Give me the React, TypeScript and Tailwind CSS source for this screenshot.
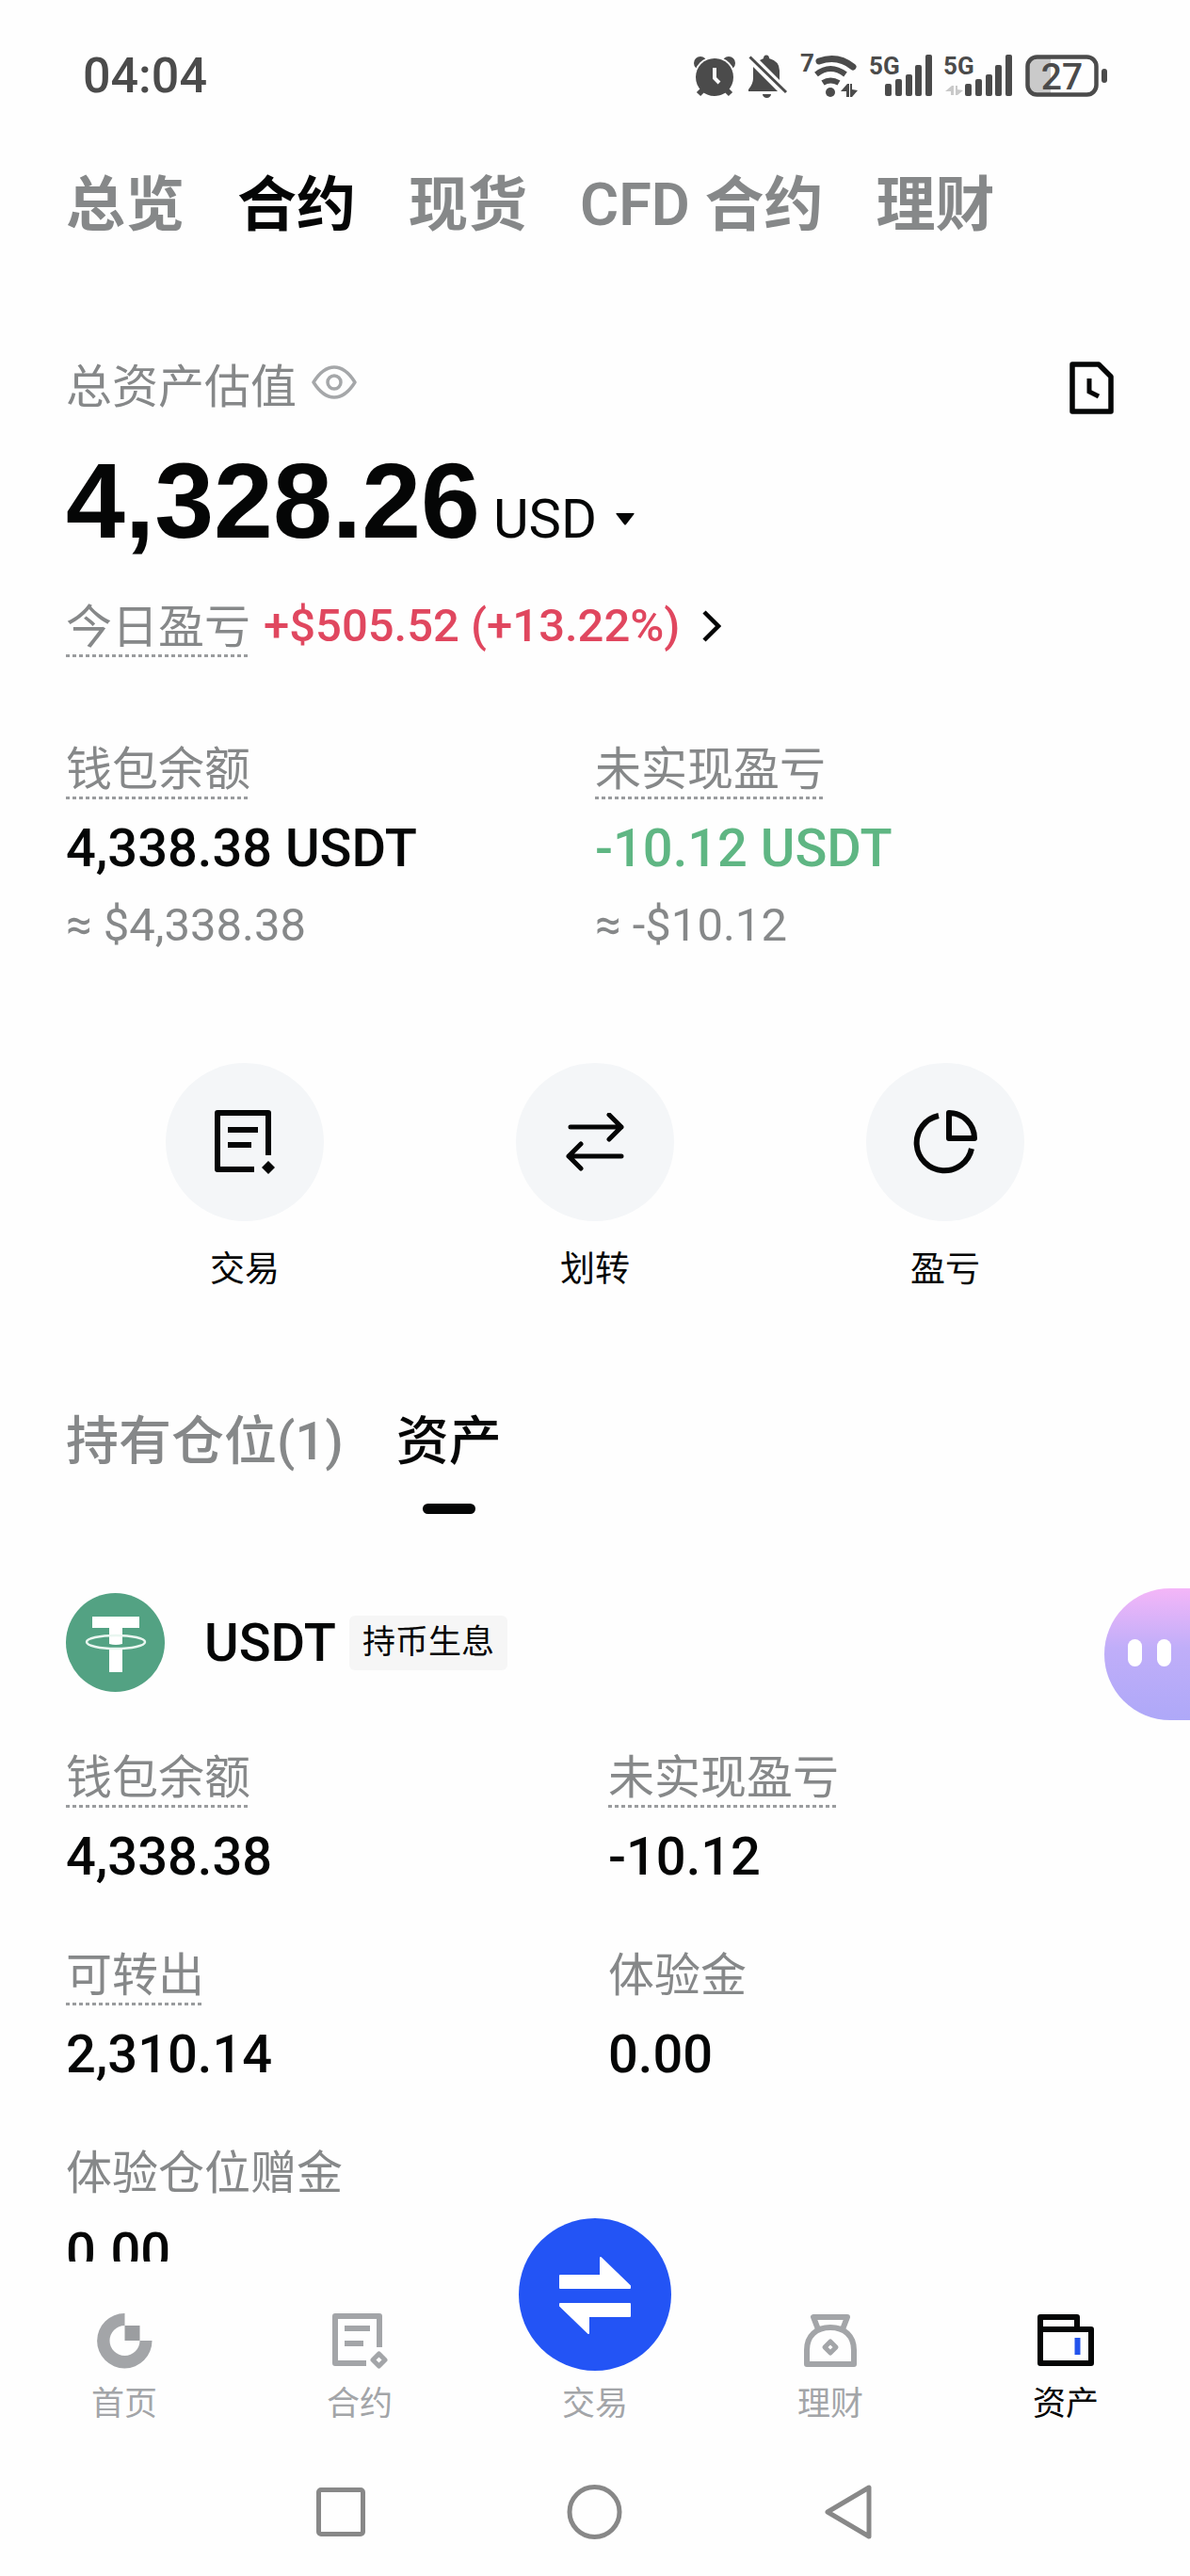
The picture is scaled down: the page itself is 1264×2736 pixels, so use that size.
import type { ReactNode } from "react";
import clsx from "clsx";

const topTabs = ["总览", "合约", "现货", "CFD 合约", "理财"];

const assetFields = [
  { label: "钱包余额", value: "4,338.38", hint: true },
  { label: "未实现盈亏", value: "-10.12", hint: true },
  { label: "可转出", value: "2,310.14", hint: true },
  { label: "体验金", value: "0.00", hint: false },
  { label: "体验仓位赠金", value: "0.00", hint: false },
];

/* Status bar icons */

function AlarmIcon() {
  return (
    <svg width="44" height="44" viewBox="0 0 44 44" fill="#4b4b4b">
      <circle cx="7" cy="8" r="7" />
      <circle cx="37" cy="8" r="7" />
      <circle cx="22" cy="23" r="22" fill="#fff" />
      <path d="M10 36 L5 41 M34 36 L39 41" stroke="#4b4b4b" strokeWidth="6" />
      <circle cx="22" cy="23" r="20" />
      <path d="M22 13 V24 L27 29" stroke="#fff" strokeWidth="4" fill="none" />
    </svg>
  );
}

function MutedIcon() {
  return (
    <svg width="42" height="46" viewBox="0 -1 42 46" fill="#4b4b4b">
      <path d="M5 12 V24 Q5 30 0 36 V38 H31 Z" />
      <path d="M12 5 L16 3 Q16 -0.5 19 -0.5 Q22 -0.5 22 3 Q33 6 33 16 V26 Z" />
      <path d="M1.5 1.5 L40 39" stroke="#4b4b4b" strokeWidth="3" />
      <path d="M15 41 h9 a4.5 4 0 0 1 -9 0" />
    </svg>
  );
}

function WifiIcon() {
  return (
    <svg
      className="overflow-visible"
      width="60"
      height="48"
      viewBox="0 0 60 48"
      fill="none"
      stroke="#4b4b4b"
      strokeLinecap="round"
    >
      <text x="-1" y="19" fontSize="26" fontWeight="700" fill="#4b4b4b" stroke="none">
        7
      </text>
      <path d="M19 8 Q39 1 55 14" strokeWidth="7" />
      <path d="M16 22 Q31 10 47 22" strokeWidth="6" strokeLinecap="butt" />
      <path d="M23 31 Q31 26 40 31" strokeWidth="6" strokeLinecap="butt" />
      <circle cx="31" cy="41" r="5" fill="#4b4b4b" stroke="none" />
      <path d="M42 40 L49 32 H51 V46 H48 V40 Z M52 32 H54 V38 L60 39 L54 46 H52 Z" fill="#4b4b4b" stroke="none" />
    </svg>
  );
}

function SignalIcon({ data }: { data?: boolean }) {
  return (
    <svg
      className="overflow-visible"
      width={data ? 71 : 65}
      height="46"
      viewBox={data ? "-6 0 71 46" : "0 0 65 46"}
      fill="#4b4b4b"
    >
      <text x={data ? -8 : -2} y="21" fontSize="26" fontWeight="700">
        5G
      </text>
      {data && <path d="M-6 39 L1 33 H3 V43 H0 V39 Z M5 33 H7 V37 L13 38 L7 43 H5 Z" fill="#c9c9c9" />}
      <rect x="15" y="31" width="7" height="13" rx="2" />
      <rect x="26" y="26" width="7" height="18" rx="2" />
      <rect x="37" y="21" width="7" height="23" rx="2" />
      <rect x="47" y="11" width="7" height="33" rx="2" />
      <rect x="58" y="0" width="7" height="44" rx="2" />
    </svg>
  );
}

function BatteryIcon() {
  return (
    <svg width="87" height="46" viewBox="0 0 87 46">
      <path d="M27 3 H12 Q3 3 3 12 V32 Q3 41 12 41 H27 Z" fill="#cacaca" />
      <rect x="2.5" y="2.5" width="73" height="40" rx="10" fill="none" stroke="#4b4b4b" strokeWidth="4.5" />
      <rect x="81" y="15" width="6" height="15" rx="3" fill="#4b4b4b" />
      <text x="39" y="37" textAnchor="middle" fontSize="39" fontWeight="500" fill="#4b4b4b">
        27
      </text>
    </svg>
  );
}

/* Page icons */

function EyeIcon() {
  return (
    <svg width="48" height="36" viewBox="0 0 48 36" fill="none" stroke="#a5a7a9" strokeWidth="3.5">
      <path d="M2 18 Q12 2 24 2 T46 18 Q36 34 24 34 T2 18 Z" strokeLinejoin="round" />
      <circle cx="24" cy="18" r="7" />
    </svg>
  );
}

function HistoryIcon() {
  return (
    <svg width="48" height="56" viewBox="0 0 48 56" fill="none" stroke="#050606" strokeWidth="5.5">
      <path d="M3 3 H31 L44 16 V53 H3 Z" strokeLinejoin="round" />
      <path d="M21 18 V32 L31 37" strokeWidth="5" />
    </svg>
  );
}

function TradeIcon() {
  return (
    <svg width="64" height="68" viewBox="0 0 64 68" fill="none" stroke="#050606" strokeWidth="6">
      <path d="M57 48 V3 H3 V63 H42" strokeLinejoin="round" />
      <path d="M14 21 H46 M14 37 H39" />
      <path d="M57 54 L64 61 L57 68 L50 61 Z" fill="#050606" stroke="none" />
    </svg>
  );
}

function TransferIcon() {
  return (
    <svg
      width="62"
      height="62"
      viewBox="0 0 62 62"
      fill="none"
      stroke="#050606"
      strokeWidth="5"
      strokeLinecap="round"
      strokeLinejoin="round"
    >
      <path d="M5 15 H59 M46 2 L59 15 L46 28" />
      <path d="M59 46 H3 M16 33 L3 46 L16 59" />
    </svg>
  );
}

function PieIcon() {
  return (
    <svg width="68" height="68" viewBox="0 0 68 68" fill="none" stroke="#050606" strokeWidth="6">
      <path d="M27 6 A29.5 29.5 0 1 0 62 41" />
      <path d="M38 3 V30 H65 A27 27 0 0 0 38 3 Z" strokeLinejoin="round" />
    </svg>
  );
}

function TetherLogo() {
  return (
    <svg width="105" height="105" viewBox="0 0 105 105">
      <circle cx="52.5" cy="52.5" r="52.5" fill="#53a283" />
      <path d="M28 25 H78 V37 H60 V54 Q53 56 46 54 V37 H28 Z" fill="#fff" />
      <path d="M46 58 Q53 60 60 58 V84 H46 Z" fill="#fff" />
      <ellipse cx="53" cy="52" rx="31" ry="7" fill="none" stroke="#e9f6f0" strokeWidth="2.5" />
    </svg>
  );
}

function HomeIcon() {
  return (
    <svg width="59" height="59" viewBox="0 0 59 59" fill="#a3a5a8">
      <path d="M29.5 0 A29.2 29.2 0 1 0 58.5 29 H45.5 A16 16 0 1 1 29.5 13 Z" />
      <path d="M29.5 13 H45.5 V29 H29.5 Z" fill="#9b9da0" />
    </svg>
  );
}

function ContractIcon() {
  return (
    <svg width="59" height="59" viewBox="0 0 59 59" fill="none" stroke="#a3a5a8" strokeWidth="6">
      <path d="M50 36 V3 H3 V53 H36" strokeLinejoin="round" />
      <path d="M13 16 H40 M13 32 H33" />
      <path d="M49.5 43 L56 49.5 L49.5 56 L43 49.5 Z" strokeWidth="5" strokeLinejoin="round" />
    </svg>
  );
}

function EarnIcon() {
  return (
    <svg width="56" height="59" viewBox="0 0 56 59" fill="none" stroke="#a3a5a8" strokeWidth="6" strokeLinejoin="round">
      <path d="M3 54 V39 C3 24 13 15 28 15 S53 24 53 39 V54 Z" />
      <path d="M15 17 L10 4 H46 L41 17" />
      <path d="M28 30 L34 36 L28 42 L22 36 Z" strokeWidth="5" />
    </svg>
  );
}

function WalletIcon() {
  return (
    <svg width="60" height="59" viewBox="0 0 60 59" fill="none" stroke="#050606" strokeWidth="6" strokeLinejoin="round">
      <path d="M3 17 V4 H42 V17" />
      <path d="M3 17 H57 V53 H3 Z" />
      <path d="M42.5 26 V44" stroke="#2354ec" />
    </svg>
  );
}

function Hint({ children }: { children: ReactNode }) {
  return (
    <span className="inline-block pb-[3px] bg-[repeating-linear-gradient(90deg,#9a9c9e_0_4px,transparent_4px_7px)] bg-bottom bg-no-repeat bg-size-[100%_3px]">
      {children}
    </span>
  );
}

function Action({ icon, label }: { icon: ReactNode; label: string }) {
  return (
    <button className="flex flex-col items-center">
      <span className="flex h-[168px] w-[168px] items-center justify-center rounded-full bg-[#f4f6f8]">
        {icon}
      </span>
      <span className="mt-7 text-[37px] leading-[48px]">{label}</span>
    </button>
  );
}

function NavItem({ icon, label, active }: { icon: ReactNode; label: string; active?: boolean }) {
  return (
    <a href="#" className={clsx("flex flex-col items-center", active ? "text-[#050606]" : "text-[#a3a5a8]")}>
      {icon}
      <span className="mt-[14px] text-[35px] leading-[48px]">{label}</span>
    </a>
  );
}

export default function App() {
  return (
    <div className="relative flex h-screen flex-col overflow-hidden bg-[#fefefe] font-['Roboto','Noto_Sans_CJK_SC',sans-serif] text-[#050606]">
      {/* Status bar */}
      <div className="flex h-[162px] shrink-0 items-center justify-between px-[88px] text-[#4b4b4b]">
        <span className="text-[52px] font-medium leading-[56px]">04:04</span>
        <div className="flex items-center gap-[14px]">
          <AlarmIcon />
          <MutedIcon />
          <WifiIcon />
          <SignalIcon />
          <SignalIcon data />
          <BatteryIcon />
        </div>
      </div>

      <main className="min-h-0 flex-1 overflow-hidden px-[70px]">
        {/* Account tabs */}
        <nav className="flex h-[112px] items-center gap-14 text-[63px] font-semibold leading-[64px]">
          {topTabs.map((tab) => (
            <button key={tab} className={clsx("whitespace-nowrap", tab !== "合约" && "text-[#868889]")}>
              {tab}
            </button>
          ))}
        </nav>

        {/* Total value */}
        <div className="mt-[110px] flex items-center justify-between">
          <div className="flex items-start gap-4 text-[49px] leading-[56px] text-[#868889]">
            总资产估值
            <button aria-label="隐藏金额" className="pt-1">
              <EyeIcon />
            </button>
          </div>
          <button aria-label="历史记录" className="mr-[10px]">
            <HistoryIcon />
          </button>
        </div>
        <div className="mt-8 flex items-baseline">
          <span className="font-['Liberation_Sans',sans-serif] text-[113px] font-bold leading-[120px]">
            4,328.26
          </span>
          <button className="ml-[14px] flex items-center gap-5 text-[58px] leading-[64px]">
            USD
            <svg width="20" height="13" viewBox="0 0 20 13" fill="#050606">
              <path d="M1 0 H19 Q20 0 19.5 1 L11 12 Q10 13 9 12 L0.5 1 Q0 0 1 0 Z" />
            </svg>
          </button>
        </div>
        <div className="mt-[47px] flex items-start text-[49px] leading-[56px]">
          <span className="text-[#868889]">
            <Hint>今日盈亏</Hint>
          </span>
          <button className="ml-[14px] flex items-center gap-[22px] font-medium leading-[52px] text-[#e0475f]">
            +$505.52 (+13.22%)
            <svg width="21" height="34" viewBox="0 0 21 34" fill="none" stroke="#050606" strokeWidth="4.5">
              <path d="M3 2 L18 17 L3 32" />
            </svg>
          </button>
        </div>

        {/* Balance */}
        <div className="mt-[92px] grid grid-cols-2 text-[49px] leading-[56px] text-[#868889]">
          <div>
            <Hint>钱包余额</Hint>
            <p className="mt-5 text-[56px] font-medium leading-[64px] text-[#050606]">4,338.38 USDT</p>
            <p className="mt-[22px]">≈ $4,338.38</p>
          </div>
          <div>
            <Hint>未实现盈亏</Hint>
            <p className="mt-5 text-[56px] font-medium leading-[64px] text-[#5fb683]">-10.12 USDT</p>
            <p className="mt-[22px]">≈ -$10.12</p>
          </div>
        </div>

        {/* Quick actions */}
        <div className="mt-[118px] grid grid-cols-3 px-1">
          <Action icon={<TradeIcon />} label="交易" />
          <Action icon={<TransferIcon />} label="划转" />
          <Action icon={<PieIcon />} label="盈亏" />
        </div>

        {/* Positions / assets */}
        <div className="mt-[126px] flex items-start gap-14 text-[56px] font-medium leading-[64px]">
          <button className="text-[#868889]">持有仓位(1)</button>
          <button className="flex flex-col items-center">
            资产
            <span className="mt-[34px] h-[11px] w-14 rounded-full bg-[#050606]" />
          </button>
        </div>

        <div className="mt-[84px] flex items-center">
          <TetherLogo />
          <span className="ml-[42px] text-[56px] font-medium leading-[64px]">USDT</span>
          <span className="ml-[14px] rounded-[6px] bg-[#f6f6f6] px-[14px] py-1 text-[35px] leading-[50px]">
            持币生息
          </span>
        </div>

        <dl className="mt-16 grid grid-cols-2 gap-x-7 gap-y-[67px]">
          {assetFields.map((f) => (
            <div key={f.label}>
              <dt className="h-[59px] text-[49px] leading-[56px] text-[#868889]">
                {f.hint ? <Hint>{f.label}</Hint> : f.label}
              </dt>
              <dd className="mt-5 text-[56px] font-medium leading-[64px]">{f.value}</dd>
            </div>
          ))}
        </dl>
      </main>

      {/* Bottom navigation */}
      <nav className="grid h-[200px] shrink-0 grid-cols-5 items-start bg-[#fefefe] px-[7px] pt-[55px]">
        <NavItem icon={<HomeIcon />} label="首页" />
        <NavItem icon={<ContractIcon />} label="合约" />
        <a href="#" className="-mt-[101px] flex flex-col items-center text-[#a3a5a8]">
          <svg width="162" height="162" viewBox="0 0 162 162">
            <circle cx="81" cy="81" r="81" fill="#2354f5" />
            <g fill="#fff" stroke="#fff" strokeWidth="2" strokeLinejoin="round">
              <path d="M44 61 H87 V42 L118 72 V74 H44 Z" />
              <path d="M118 91 H44 V93 L74 122 V104 H118 Z" />
            </g>
          </svg>
          <span className="mt-3 text-[35px] leading-[48px]">交易</span>
        </a>
        <NavItem icon={<EarnIcon />} label="理财" />
        <NavItem icon={<WalletIcon />} label="资产" active />
      </nav>

      {/* System keys */}
      <div className="flex h-[134px] shrink-0 items-center justify-center gap-[210px]">
        <button aria-label="最近任务">
          <svg width="60" height="60" viewBox="0 0 60 60" fill="none" stroke="#888" strokeWidth="5">
            <rect x="6.5" y="5.5" width="47" height="47" rx="2.5" />
          </svg>
        </button>
        <button aria-label="主屏幕">
          <svg width="60" height="60" viewBox="0 0 60 60" fill="none" stroke="#888" strokeWidth="5">
            <circle cx="29.5" cy="29" r="26.5" />
          </svg>
        </button>
        <button aria-label="返回">
          <svg width="60" height="60" viewBox="0 0 60 60" fill="none" stroke="#888" strokeWidth="5" strokeLinejoin="round">
            <path d="M51 3 V55 L7 29 Z" />
          </svg>
        </button>
      </div>

      {/* Floating assistant */}
      <button
        aria-label="助手"
        className="absolute right-0 top-[1687px] flex h-[140px] w-[91px] items-center gap-4 rounded-l-full bg-linear-to-b from-[#f4b6f8] via-[#c0aef9] via-45% to-[#aea8f8] pb-1 pl-[25px]"
      >
        <span className="h-[29px] w-[15px] rounded-full bg-white" />
        <span className="h-[29px] w-[15px] rounded-full bg-white" />
      </button>
    </div>
  );
}
